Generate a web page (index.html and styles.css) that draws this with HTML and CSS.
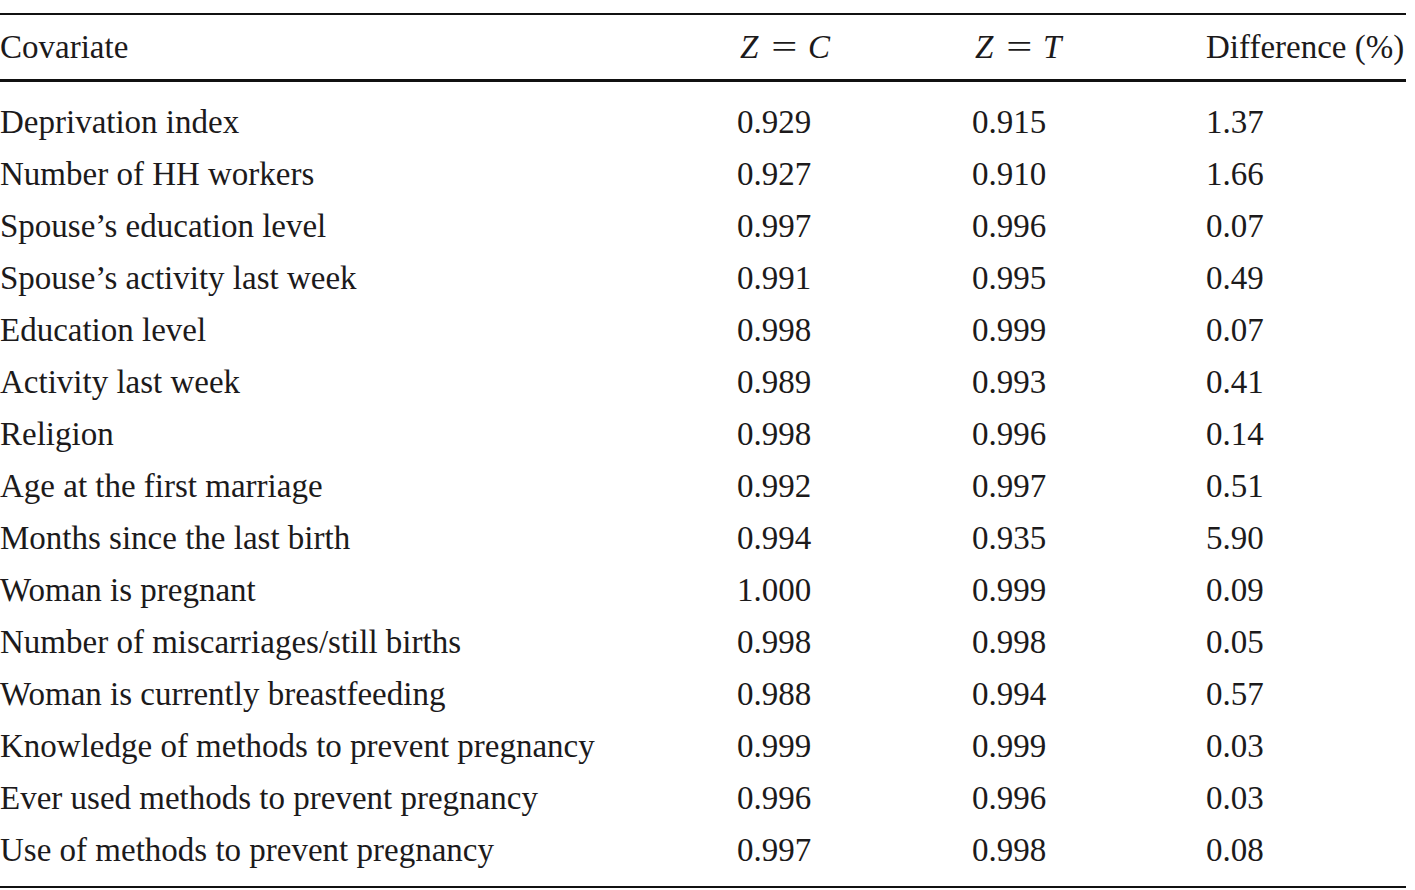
FILE: index.html
```html
<!DOCTYPE html>
<html>
<head>
<meta charset="utf-8">
<link rel="stylesheet" href="styles.css">
</head>
<body>
<table class="tbl">
  <colgroup>
    <col class="c1"><col class="c2"><col class="c3"><col class="c4">
  </colgroup>
  <thead>
    <tr>
      <th>Covariate</th>
      <th class="math"><span class="m">Z</span><span class="eq">=</span><span class="m">C</span></th>
      <th class="math"><span class="m">Z</span><span class="eq">=</span><span class="m">T</span></th>
      <th>Difference (%)</th>
    </tr>
  </thead>
  <tbody>
    <tr class="first"><td>Deprivation index</td><td>0.929</td><td>0.915</td><td>1.37</td></tr>
    <tr><td>Number of HH workers</td><td>0.927</td><td>0.910</td><td>1.66</td></tr>
    <tr><td>Spouse’s education level</td><td>0.997</td><td>0.996</td><td>0.07</td></tr>
    <tr><td>Spouse’s activity last week</td><td>0.991</td><td>0.995</td><td>0.49</td></tr>
    <tr><td>Education level</td><td>0.998</td><td>0.999</td><td>0.07</td></tr>
    <tr><td>Activity last week</td><td>0.989</td><td>0.993</td><td>0.41</td></tr>
    <tr><td>Religion</td><td>0.998</td><td>0.996</td><td>0.14</td></tr>
    <tr><td>Age at the first marriage</td><td>0.992</td><td>0.997</td><td>0.51</td></tr>
    <tr><td>Months since the last birth</td><td>0.994</td><td>0.935</td><td>5.90</td></tr>
    <tr><td>Woman is pregnant</td><td>1.000</td><td>0.999</td><td>0.09</td></tr>
    <tr><td>Number of miscarriages/still births</td><td>0.998</td><td>0.998</td><td>0.05</td></tr>
    <tr><td>Woman is currently breastfeeding</td><td>0.988</td><td>0.994</td><td>0.57</td></tr>
    <tr><td>Knowledge of methods to prevent pregnancy</td><td>0.999</td><td>0.999</td><td>0.03</td></tr>
    <tr><td>Ever used methods to prevent pregnancy</td><td>0.996</td><td>0.996</td><td>0.03</td></tr>
    <tr class="last"><td>Use of methods to prevent pregnancy</td><td>0.997</td><td>0.998</td><td>0.08</td></tr>
  </tbody>
</table>
</body>
</html>
```

FILE: styles.css
```css
html, body {
  margin: 0;
  padding: 0;
  background: #ffffff;
}

body {
  font-family: "Liberation Serif", "Times New Roman", serif;
  font-size: 33px;
  color: #1c1a1b;
}

.tbl {
  margin-top: 13px;
  width: 1406px;
  border-collapse: collapse;
  table-layout: fixed;
  border-top: 2px solid #111;
  border-bottom: 2px solid #111;
}

.c1 { width: 737px; }
.c2 { width: 235px; }
.c3 { width: 234px; }
.c4 { width: 200px; }

.tbl th,
.tbl td {
  padding: 0;
  text-align: left;
  font-weight: normal;
  white-space: nowrap;
  vertical-align: middle;
}

.tbl thead tr {
  border-bottom: 3px solid #111;
}

.tbl th {
  height: 64px;
  line-height: 64px;
}

.tbl th.math {
  padding-left: 3px;
}

.tbl td {
  height: 52px;
  line-height: 52px;
}

.tbl tr.first td {
  padding-top: 14px;
}

.tbl tr.last td {
  padding-bottom: 10px;
}

.m {
  font-style: italic;
}

.eq {
  display: inline-block;
  margin: 0 14px 0 17px;
  transform: scaleX(1.4);
}
```
